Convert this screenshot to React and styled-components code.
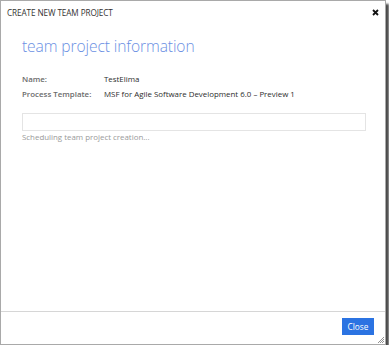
import React from "react";
import styled, { createGlobalStyle } from "styled-components";

const Global = createGlobalStyle`
  html, body { margin: 0; padding: 0; background: #ffffff; }
  body { font-family: "Open Sans", "Noto Sans", sans-serif; }
`;

const Dialog = styled.div`
  box-sizing: border-box;
  width: 386px;
  height: 345px;
  border: 1px solid #a9a9a9;
  background: #ffffff;
  box-shadow: 3px 4px 2px rgba(30, 30, 30, 0.8);
  display: flex;
  flex-direction: column;
  position: relative;
`;

const TitleBar = styled.div`
  display: flex;
  align-items: center;
  justify-content: space-between;
  height: 22px;
  padding: 0 5px 0 6px;
`;

const TitleText = styled.span`
  font-size: 8.2px;
  color: #333333;
  letter-spacing: -0.1px;
`;

const CloseX = styled.svg`
  width: 7px;
  height: 7px;
  margin-right: 1px;
`;

const Content = styled.div`
  flex: 1;
  padding: 12px 20px 0 21px;
  display: flex;
  flex-direction: column;
`;

const Heading = styled.h1`
  margin: 0 0 16px 0;
  font-weight: 300;
  font-size: 15.6px;
  color: #6a8fe3;
  letter-spacing: -0.1px;
  line-height: 22px;
`;

const InfoGrid = styled.div`
  display: grid;
  grid-template-columns: 82px 1fr;
  row-gap: 3px;
  font-size: 7.9px;
  line-height: 12px;
`;

const Label = styled.span`
  color: #6b6b6b;
  font-weight: 600;
`;

const Value = styled.span`
  color: #2d2d2d;
`;

const Progress = styled.div`
  margin-top: 13px;
  height: 18px;
  box-sizing: border-box;
  border: 1px solid #e4e4e4;
  width: 344px;
`;

const Status = styled.div`
  margin-top: 0;
  font-size: 7.9px;
  line-height: 12px;
  color: #9a9a9a;
`;

const Footer = styled.div`
  border-top: 1px solid #d6d6d6;
  height: 33px;
  display: flex;
  align-items: flex-start;
  justify-content: flex-end;
  padding: 6px 11px 0 0;
  box-sizing: border-box;
`;

const Button = styled.button`
  background: #2b73e2;
  color: #ffffff;
  border: none;
  font-family: inherit;
  font-size: 8.3px;
  width: 32px;
  height: 17px;
  padding: 0;
  cursor: pointer;
`;

const Grip = styled.svg`
  position: absolute;
  right: 1px;
  bottom: 1px;
  width: 7px;
  height: 7px;
`;

export default function App() {
  return (
    <>
      <Global />
      <Dialog>
        <TitleBar>
          <TitleText>CREATE NEW TEAM PROJECT</TitleText>
          <CloseX viewBox="0 0 7 7">
            <path d="M1 1 L6 6 M6 1 L1 6" stroke="#111" strokeWidth="1.8" />
          </CloseX>
        </TitleBar>
        <Content>
          <Heading>team project information</Heading>
          <InfoGrid>
            <Label>Name:</Label>
            <Value>TestElima</Value>
            <Label>Process Template:</Label>
            <Value>MSF for Agile Software Development 6.0 – Preview 1</Value>
          </InfoGrid>
          <Progress />
          <Status>Scheduling team project creation...</Status>
        </Content>
        <Footer>
          <Button>Close</Button>
        </Footer>
        <Grip viewBox="0 0 7 7">
          <path d="M7 1 L1 7 M7 3 L3 7 M7 5 L5 7" stroke="#777" strokeWidth="0.8" />
        </Grip>
      </Dialog>
    </>
  );
}
